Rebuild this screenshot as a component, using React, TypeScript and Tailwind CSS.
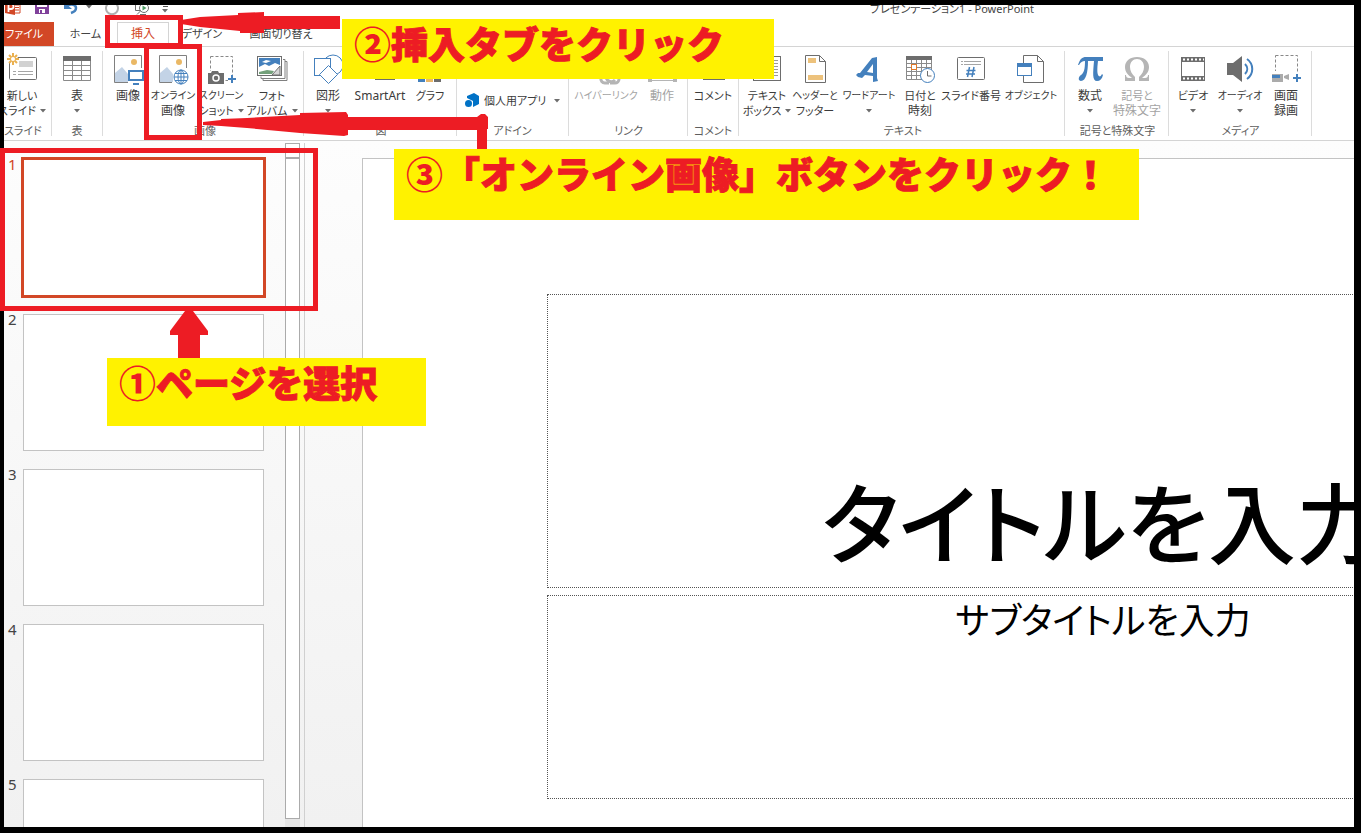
import type { ReactNode } from "react";

const GRAY = "#6d6d6d";
const BLUE = "#4480bd";
const LIGHT = "#b5b5b5";

function Icon({ children, w = 32 }: { children: ReactNode; w?: number }) {
  return (
    <svg width={w} height={32} viewBox={`0 0 ${w} 32`} fill="none" aria-hidden="true" className="shrink-0">
      {children}
    </svg>
  );
}

const Mountains = ({ x }: { x: number }) => (
  <>
    <path d={`M${x + 1} 29V20l7-6 6 7v8z`} fill="#c3d3e6" />
    <circle cx={x + 20} cy={9} r={3} fill="#eab865" />
  </>
);

const NewSlideIcon = () => (
  <Icon>
    <rect x="3.500" y="4.500" width="27" height="22" rx="1" fill="#fff" stroke={GRAY} />
    <path d="M13 8h14v6H13z" fill="#d2d2d2" />
    <path d="M7 18.500h3M12 18.500h15M7 21.500h3M12 21.500h15" stroke="#a5a5a5" />
    <circle cx="7" cy="6" r="5" fill="#fff" />
    <path d="M7 0v12M1 6h12M3 2l8 8M11 2l-8 8" stroke="#eab04f" strokeWidth="2" />
    <circle cx="7" cy="6" r="2" fill="#fff" />
  </Icon>
);

const TableIcon = () => (
  <Icon>
    <path d="M2.500 4v23.500h27V4M2.500 12.500h27M2.500 17.500h27M2.500 22.500h27M11.500 8v19M20.500 8v19" stroke="#8a8a8a" />
    <path d="M2 3h28v5H2z" fill={GRAY} />
  </Icon>
);

const PictureIcon = () => (
  <Icon>
    <Mountains x={2} />
    <path d="M16 29.500H2.500v-27h27V15" stroke="#808080" />
    <rect x="17" y="18" width="14" height="9" fill="#fff" stroke={BLUE} strokeWidth="2" />
    <path d="M21 31h6" stroke={BLUE} strokeWidth="2" />
  </Icon>
);

const OnlinePictureIcon = () => (
  <Icon>
    <Mountains x={2} />
    <path d="M15 29.500H2.500v-27h27V15" stroke="#808080" />
    <circle cx="24" cy="24" r="7" fill="#fff" stroke={BLUE} />
    <ellipse cx="24" cy="24" rx="3" ry="7" stroke={BLUE} />
    <path d="M17 24h14M24 17v14M18 20.500h12M18 27.500h12" stroke={BLUE} />
  </Icon>
);

const ScreenshotIcon = () => (
  <Icon>
    <rect x="5.500" y="3.500" width="22" height="24" stroke="#888" strokeDasharray="3 2" />
    <path d="M2 18h18v14H2z" fill="#fff" />
    <path d="M3 20h3l1-2h6l1 2h5v11H3z" fill={GRAY} />
    <circle cx="11" cy="25" r="3" stroke="#fff" strokeWidth="1.500" />
    <path d="M23 26h8M27 22v8" stroke="#fff" strokeWidth="5" />
    <path d="M23 26h8M27 22v8" stroke={BLUE} strokeWidth="2" />
  </Icon>
);

const AlbumIcon = () => (
  <Icon>
    <path d="M27 6.500h2v19H5v-2M29 8.500h2v19H7v-2" stroke="#808080" />
    <rect x="1.500" y="3.500" width="24" height="19" fill="#fff" stroke={GRAY} />
    <path d="M3 5h21v7l-5-2-6 3-4-2-6 3z" fill={BLUE} />
    <path d="M6 9l4-2 5 1-5 2z" fill="#fff" />
    <path d="M3 19l8-2 7 1-2 3H3z" fill="#73a07a" />
    <path d="M16 22l8-9v9z" fill="#d5d5d5" stroke={GRAY} />
  </Icon>
);

const ShapesIcon = () => (
  <Icon w={34}>
    <circle cx="22" cy="12" r="10" stroke={BLUE} />
    <rect x="3.500" y="5.500" width="16" height="17" fill="#fff" stroke={BLUE} />
    <path d="M17.500 12.500l9 9-9 9-9-9z" fill="#fff" stroke={BLUE} />
  </Icon>
);

const SmartArtIcon = () => (
  <Icon>
    <path d="M3 4h16v8H3zM11 24h20v3H11z" fill={GRAY} />
  </Icon>
);

const ChartIcon = () => (
  <Icon>
    <path d="M4 14h7v15H4z" fill={BLUE} />
    <path d="M12 8h7v21h-7z" fill="#eab865" />
    <path d="M20 18h7v11h-7z" fill={GRAY} />
  </Icon>
);

const LinkIcon = () => (
  <Icon w={38}>
    <path d="M22 30h-4a4 4 0 0 1-4-5l6-8M23 30h5a4 4 0 0 0 4-4c0-3-3-4-5-3" stroke={LIGHT} strokeWidth="3" />
    <path d="M19 24c1 5 6 6 9 3" stroke={LIGHT} strokeWidth="3" />
  </Icon>
);

const ActionIcon = () => (
  <Icon>
    <rect x="4.500" y="4.500" width="24" height="23" stroke={LIGHT} />
    <path d="M2 26h4v3H2zM27 26h4v3h-4z" fill={LIGHT} />
  </Icon>
);

const CommentIcon = () => (
  <Icon>
    <path d="M6 5h22v22H6z" fill={GRAY} />
  </Icon>
);

const TextBoxIcon = () => (
  <Icon>
    <rect x="2.500" y="3.500" width="27" height="24" stroke={GRAY} />
    <path d="M19 7.500h8M19 10.500h8M19 13.500h8M19 16.500h8M6 19.500h21M6 22.500h21" stroke="#9a9a9a" />
  </Icon>
);

const HeaderFooterIcon = () => (
  <Icon>
    <path d="M6.500 2.500h14l6 6v21h-20z" fill="#fff" stroke={GRAY} />
    <path d="M20.500 2.500v6h6" stroke={GRAY} />
    <path d="M9 5h8v5H9zM9 22h15v5H9z" fill="#edc27c" />
  </Icon>
);

const WordArtIcon = () => (
  <Icon>
    <path d="M3 22l2-2 2 0L19 5l5-1 0 21 1 3-5 1 0-6-8-1-3 3-4-1zM14 19l6 1 0-9z" fill={BLUE} fillRule="evenodd" />
  </Icon>
);

const DateTimeIcon = () => (
  <Icon>
    <path d="M2.500 5v21.500h25V5M2.500 10.500h25M2.500 14.500h25M2.500 18.500h25M2.500 22.500h25M7.500 7v19M12.500 7v19M17.500 7v19M22.500 7v19" stroke="#8a8a8a" />
    <path d="M2 3h26v4H2z" fill={GRAY} />
    <rect x="7.500" y="11.500" width="5" height="5" fill="#fff" stroke="#e07b2c" />
    <circle cx="23.500" cy="22.500" r="7" fill="#fff" stroke={BLUE} />
    <path d="M23.500 18v5h4" stroke={GRAY} />
  </Icon>
);

const SlideNumberIcon = () => (
  <Icon>
    <rect x="2.500" y="4.500" width="27" height="22" rx="1" fill="#fff" stroke={GRAY} />
    <path d="M6 8.500h2M9 8.500h17M6 11.500h2M9 11.500h17" stroke="#a5a5a5" />
    <path d="M14.500 14l-2 10M19 14l-2 10M11.500 17.500h9M11 21h9" stroke={BLUE} strokeWidth="1.500" />
  </Icon>
);

const ObjectIcon = () => (
  <Icon>
    <path d="M8.500 11V2.500h14l6 6v21h-20V22" stroke={GRAY} />
    <path d="M22.500 2.500v6h6" stroke={GRAY} />
    <rect x="2.500" y="11.500" width="14" height="11" fill="#fff" stroke={BLUE} />
    <path d="M2 10h15v4H2z" fill={BLUE} />
  </Icon>
);

const PiIcon = () => (
  <Icon>
    <path
      d="M4 12c2-6 4-8 8-8h17v4h-5c-1 8-1 14 1 15 1 1 2 0 3-2l1 1c-1 4-3 6-6 6-5 0-4-8-3-20h-6c0 11-2 20-7 20-3 0-3-4 0-6 3-2 4-6 4-14-3 0-4 1-6 4z"
      fill={BLUE}
    />
  </Icon>
);

const OmegaIcon = () => (
  <Icon>
    <path
      d="M4 22h1c0 2 1 3 3 3h3c-4-3-7-6-7-11C4 8 9 4 16 4s12 4 12 10c0 5-3 8-7 11h3c2 0 3-1 3-3h1v6H18v-4c3-3 5-6 5-10 0-5-3-8-7-8s-7 3-7 8c0 4 2 7 5 10v4H4z"
      fill={LIGHT}
    />
  </Icon>
);

const VideoIcon = () => (
  <Icon>
    <path d="M4 4h24v24H4z" fill={GRAY} />
    <path d="M5 9h22v14H5z" fill="#fff" />
    <path d="M6 6.500h21M6 25.500h21" stroke="#fff" strokeWidth="2" strokeDasharray="2 2" />
  </Icon>
);

const AudioIcon = () => (
  <Icon>
    <path d="M3 10h6l9-7v26l-9-7H3z" fill={GRAY} />
    <path d="M21 11c3 3 3 7 0 10M23 6c7 5 7 15 0 20" stroke={BLUE} strokeWidth="2" />
  </Icon>
);

const ScreenRecordIcon = () => (
  <Icon>
    <rect x="5.500" y="2.500" width="22" height="24" stroke="#888" strokeDasharray="3 2" />
    <path d="M1 18h21v13H1zM22 20h10v12H22z" fill="#fff" />
    <path d="M2 21h11v8H2zM14 23l5-2v6l-5-2z" fill="#ababab" />
    <path d="M2 22h8v3H2z" fill={BLUE} />
    <path d="M23 25h8M27 21v8" stroke={BLUE} strokeWidth="2" />
  </Icon>
);

const Caret = () => (
  <svg width="6" height="4" viewBox="0 0 6 4" aria-hidden="true" className="shrink-0">
    <path d="M0 0h6L3 3.500z" fill="#6d6d6d" />
  </svg>
);

type Tool = {
  label: string;
  second?: string;
  caret?: boolean;
  disabled?: boolean;
  icon: ReactNode;
  width: string;
  tight?: boolean;
};

// Labels with kana are set a step smaller than plain kanji or Latin ones.
const hasKana = (text: string) => /[\u3040-\u30ff]/.test(text);
const labelSize = (text: string) => (hasKana(text) ? "text-[11px]" : "text-[12px]");

function ToolButton({ tool }: { tool: Tool }) {
  return (
    <button
      type="button"
      disabled={tool.disabled}
      className={`flex flex-col items-center whitespace-nowrap leading-[15px] ${tool.width} ${
        tool.disabled ? "text-[#a3a3a3]" : "text-[#3b3b3b]"
      }`}
    >
      <span className="flex h-[37px] items-start justify-center pt-[2px]">{tool.icon}</span>
      <span className={`h-[15px] ${tool.tight ? "text-[10px]" : labelSize(tool.label)}`}>{tool.label}</span>
      <span className="flex h-[15px] items-center gap-1">
        {tool.second && <span className={labelSize(tool.second)}>{tool.second}</span>}
        {tool.caret && <Caret />}
      </span>
    </button>
  );
}

function Group({ name, width, children }: { name: string; width: string; children: ReactNode }) {
  return (
    <section
      aria-label={name}
      className={`flex h-[85px] shrink-0 flex-col justify-between border-r border-[#dcdcdc] ${width}`}
    >
      <div className="flex">{children}</div>
      <div className="whitespace-nowrap text-center text-[11px] leading-[10px] text-[#5e5e5e]">{name}</div>
    </section>
  );
}

const groups: { name: string; width: string; tools: Tool[] }[] = [
  {
    name: "スライド",
    width: "w-[48px] pr-[10px]",
    tools: [{ label: "新しい", second: "スライド", caret: true, icon: <NewSlideIcon />, width: "w-[36px]" }],
  },
  { name: "表", width: "w-[51px]", tools: [{ label: "表", caret: true, icon: <TableIcon />, width: "w-[50px]" }] },
  {
    name: "画像",
    width: "w-[201px] pl-1",
    tools: [
      { label: "画像", icon: <PictureIcon />, width: "w-[42px]" },
      { label: "オンライン", second: "画像", icon: <OnlinePictureIcon />, width: "w-[48px]", tight: true },
      { label: "スクリーン", second: "ショット", caret: true, icon: <ScreenshotIcon />, width: "w-[48px]", tight: true },
      { label: "フォト", second: "アルバム", caret: true, icon: <AlbumIcon />, width: "w-[54px]" },
    ],
  },
  {
    name: "図",
    width: "w-[153px] pl-[2px]",
    tools: [
      { label: "図形", caret: true, icon: <ShapesIcon />, width: "w-[44px]" },
      { label: "SmartArt", icon: <SmartArtIcon />, width: "w-[60px]" },
      { label: "グラフ", icon: <ChartIcon />, width: "w-[40px]" },
    ],
  },
  { name: "アドイン", width: "w-[112px]", tools: [] },
  {
    name: "リンク",
    width: "w-[119px] pl-px",
    tools: [
      { label: "ハイパーリンク", icon: <LinkIcon />, width: "w-[72px]", disabled: true, tight: true },
      { label: "動作", icon: <ActionIcon />, width: "w-[40px]", disabled: true },
    ],
  },
  { name: "コメント", width: "w-[51px]", tools: [{ label: "コメント", icon: <CommentIcon />, width: "w-[50px]" }] },
  {
    name: "テキスト",
    width: "w-[326px] pl-[3px]",
    tools: [
      { label: "テキスト", second: "ボックス", caret: true, icon: <TextBoxIcon />, width: "w-[50px]" },
      { label: "ヘッダーと", second: "フッター", icon: <HeaderFooterIcon />, width: "w-[46px]", tight: true },
      { label: "ワードアート", caret: true, icon: <WordArtIcon />, width: "w-[62px]", tight: true },
      { label: "日付と", second: "時刻", icon: <DateTimeIcon />, width: "w-[40px]" },
      { label: "スライド番号", icon: <SlideNumberIcon />, width: "w-[62px]" },
      { label: "オブジェクト", icon: <ObjectIcon />, width: "w-[58px]", tight: true },
    ],
  },
  {
    name: "記号と特殊文字",
    width: "w-[104px] pl-[2px]",
    tools: [
      { label: "数式", caret: true, icon: <PiIcon />, width: "w-[46px]" },
      { label: "記号と", second: "特殊文字", icon: <OmegaIcon />, width: "w-[48px]", disabled: true },
    ],
  },
  {
    name: "メディア",
    width: "w-[143px] pl-px",
    tools: [
      { label: "ビデオ", caret: true, icon: <VideoIcon />, width: "w-[46px]" },
      { label: "オーディオ", caret: true, icon: <AudioIcon />, width: "w-[48px]", tight: true },
      { label: "画面", second: "録画", icon: <ScreenRecordIcon />, width: "w-[44px]" },
    ],
  },
];

function TitleBar() {
  return (
    <header className="h-4 shrink-0 overflow-hidden">
      <div className="-mt-[6px] flex h-5 items-start">
        <div className="flex w-[866px] shrink-0 items-start">
          <svg width="18" height="16" viewBox="0 0 18 16" aria-hidden="true">
            <path d="M9 2h7v12H9z" fill="#fff" stroke="#d24726" />
            <path d="M11 6h4M11 8.500h4M11 11h4" stroke="#d24726" />
            <path d="M1 1l10-1v16L1 14z" fill="#d24726" />
            <path d="M4.500 13V5H7a2 2 0 0 1 0 5H5" stroke="#fff" strokeWidth="1.800" fill="none" />
          </svg>
          <button type="button" aria-label="上書き保存" className="ml-[13px]">
            <svg width="14" height="16" viewBox="0 0 14 16">
              <path d="M0 1h14v14H0z" fill="#80419b" />
              <path d="M2 2h10v6H2zM4 10h6v4H4z" fill="#fff" />
              <path d="M5 11h2v3H5z" fill="#80419b" />
            </svg>
          </button>
          <button type="button" aria-label="元に戻す" className="ml-[15px] flex items-center gap-[6px]">
            <svg width="16" height="16" viewBox="0 0 16 16" fill="none">
              <path d="M3 7c5-3 9-1 9 2 0 2-2 4-5 5" stroke="#4480bd" strokeWidth="2.500" />
              <path d="M0 3v7h8z" fill="#4480bd" />
            </svg>
            <Caret />
          </button>
          <button type="button" aria-label="やり直し" disabled className="ml-[13px]">
            <svg width="14" height="16" viewBox="0 0 14 16" fill="none">
              <path d="M10 4a6 6 0 1 1-6 0M10 0v5h4" stroke="#b0b0b0" strokeWidth="2" />
            </svg>
          </button>
          <button type="button" aria-label="先頭から開始" className="ml-[15px]">
            <svg width="16" height="16" viewBox="0 0 16 16" fill="none">
              <path d="M0 1.500h13M1.500 1v10.500H6M3 15.500l4-4" stroke="#6d6d6d" />
              <circle cx="10" cy="9" r="4.500" fill="#fff" stroke="#6d6d6d" />
              <path d="M8.500 6.500v5l4-2.500z" fill="#4d9a63" />
              <path d="M6 15.500h6" stroke="#6d6d6d" />
            </svg>
          </button>
          <button type="button" aria-label="クイック アクセス ツール バーのカスタマイズ" className="ml-3 flex h-5 flex-col items-center justify-center gap-[2px]">
            <span className="h-px w-[5px] bg-[#555]" />
            <Caret />
          </button>
        </div>
        <span className="whitespace-nowrap text-[11px] leading-5 text-[#444]">プレゼンテーション1 - PowerPoint</span>
      </div>
    </header>
  );
}

function TabRow() {
  return (
    <nav className="flex h-[26px] shrink-0 items-end whitespace-nowrap border-b border-[#d4d4d4] text-[11px] text-[#444]">
      <button type="button" className="h-6 w-[50px] bg-[#d24726] pr-[10px] text-center text-white">
        ファイル
      </button>
      <button type="button" className="h-6 w-[63px]">ホーム</button>
      <button type="button" className="-mb-px h-[25px] w-[52px] border border-b-0 border-[#d4d4d4] bg-white pb-[2px] text-[12px] text-[#d24726]">
        挿入
      </button>
      <button type="button" className="h-6 w-[66px]">デザイン</button>
      <button type="button" className="h-6 w-[92px]">画面切り替え</button>
    </nav>
  );
}

function AddinButton() {
  return (
    <button type="button" className="mt-[42px] ml-2 flex items-center text-[11px] leading-[15px] text-[#3b3b3b]">
      <svg width="15" height="15" viewBox="0 0 15 15" aria-hidden="true" className="mr-1">
        <path d="M2 3l7-3 5 3v8l-6 3V8L2 5z" fill="#0072c6" />
        <circle cx="3.500" cy="10.500" r="3.500" fill="#0072c6" />
      </svg>
      <span>個人用アプリ</span>
      <span className="ml-2">
        <Caret />
      </span>
    </button>
  );
}

function Thumbnails() {
  return (
    <ol className="flex w-[281px] shrink-0 flex-col gap-[18px] overflow-hidden pt-[18px]">
      {[1, 2, 3, 4, 5].map((n) => (
        <li key={n} className="flex shrink-0">
          <span className={`w-[19px] pl-1 text-[15px] leading-[10px] ${n === 1 ? "text-[#d24726]" : "text-[#444]"}`}>
            {n}
          </span>
          <button
            type="button"
            aria-label={`スライド ${n}`}
            className={`h-[137px] w-[241px] border bg-white ${
              n === 1 ? "border-[#d24726] ring-2 ring-[#d24726]" : "border-[#c3c3c3]"
            }`}
          />
        </li>
      ))}
    </ol>
  );
}

function Scrollbar() {
  return (
    <div className="mt-[2px] flex w-[15px] shrink-0 flex-col bg-[#e6e6e6] pb-2">
      <div className="h-[15px] shrink-0 border border-[#ababab] bg-white" />
      <div className="flex-1 border border-[#ababab] bg-white" />
    </div>
  );
}

function SlideCanvas() {
  return (
    <div className="min-w-0 flex-1 overflow-hidden pt-[17px] pl-[57px] font-['Noto_Sans_CJK_JP',sans-serif]">
      <div className="flex h-full w-[1482px] flex-col items-center gap-[7px] border border-b-0 border-[#c3c3c3] bg-white pt-[135px]">
        <div className="flex h-[294px] w-[1112px] shrink-0 items-end justify-center border border-dotted border-[#555] pb-2 text-[88px] leading-[120px] font-medium text-black">
          タイトルを入力
        </div>
        <div className="h-[204px] w-[1112px] shrink-0 border border-dotted border-[#555] text-center text-[36px] leading-[44px] text-black">
          サブタイトルを入力
        </div>
      </div>
    </div>
  );
}

function Callout({ text, place }: { text: string; place: string }) {
  return (
    <p
      className={`absolute whitespace-nowrap bg-[#fff200] pl-3 font-['Noto_Sans_CJK_JP',sans-serif] text-[37px] leading-[48px] font-black text-[#ed1c24] [font-feature-settings:normal] ${place}`}
    >
      {text.slice(0, 1)}
      <span className="[-webkit-text-stroke:1px_#ed1c24]">{text.slice(1)}</span>
    </p>
  );
}

function Annotations() {
  return (
    <div className="pointer-events-none absolute inset-0 overflow-hidden">
      <div className="absolute top-[15px] left-[105px] h-[33px] w-[78px] border-5 border-[#ed1c24]" />
      <div className="absolute top-[44px] left-[144px] h-[96px] w-[58px] border-5 border-[#ed1c24]" />
      <div className="absolute top-[148px] left-0 h-[163px] w-[318px] border-5 border-[#ed1c24]" />
      <svg width="600" height="400" viewBox="0 0 600 400" className="absolute top-0 left-0" fill="#ed1c24" aria-hidden="true">
        <path d="M181 20l19-3 38-2 0-2 26-1v4h76v13h-76v4h-24v-2l-40-4-19-3z" />
        <path d="M203 122l18-2 0-1 26-1 53-3v-2l46-1 2 3v2h129l4-3 4 0 3 3v12h-1v22h-10v-21H348v5l-4 1-44-3-53-5-26-2-18-1z" />
        <path d="M185 311h8l15 20v4h-8v24h-22v-24h-8v-4z" />
      </svg>
      <Callout text="②挿入タブをクリック" place="top-[19px] left-[342px] h-[60px] w-[432px]" />
      <Callout text="③「オンライン画像」ボタンをクリック！" place="top-[149px] left-[394px] h-[71px] w-[745px]" />
      <Callout text="①ページを選択" place="top-[358px] left-[107px] h-[68px] w-[319px]" />
    </div>
  );
}

export default function App() {
  return (
    <div className="relative h-screen bg-black pt-[5px] pr-[7px] pb-[6px] pl-1 font-['Noto_Sans','Noto_Sans_CJK_JP',sans-serif] [font-feature-settings:'palt']">
      <div className="flex h-full flex-col overflow-hidden bg-white">
        <TitleBar />
        <TabRow />
        <div className="flex shrink-0 border-b border-[#d4d4d4] pt-1 pb-1">
          {groups.map((g) => (
            <Group key={g.name} name={g.name} width={g.width}>
              {g.tools.length ? g.tools.map((t) => <ToolButton key={t.label} tool={t} />) : <AddinButton />}
            </Group>
          ))}
        </div>
        <main className="flex min-h-0 flex-1 bg-linear-to-b from-[#fdfdfd] to-[#f1f1f1]">
          <Thumbnails />
          <Scrollbar />
          <div className="mt-[2px] ml-1 w-px shrink-0 bg-[#d0d0d0]" />
          <SlideCanvas />
        </main>
      </div>
      <Annotations />
    </div>
  );
}
